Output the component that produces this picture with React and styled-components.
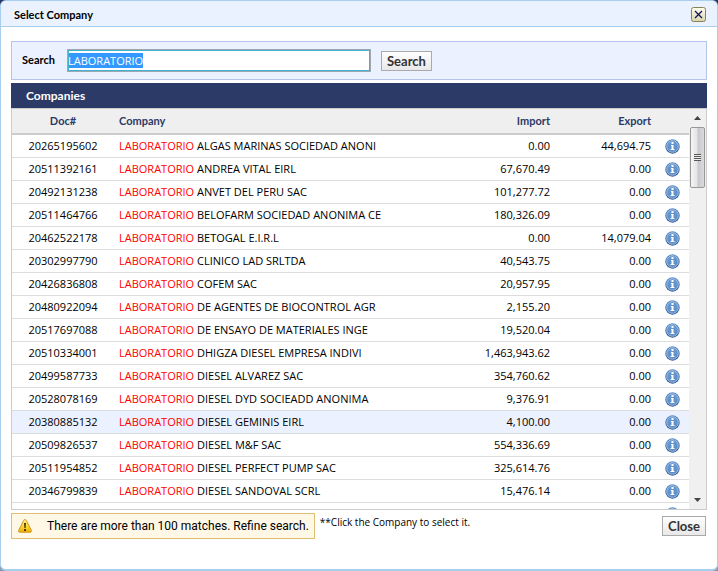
import React from "react";
import styled, { createGlobalStyle } from "styled-components";

const rows = [
  ["20265195602", "ALGAS MARINAS SOCIEDAD ANONI", "0.00", "44,694.75"],
  ["20511392161", "ANDREA VITAL EIRL", "67,670.49", "0.00"],
  ["20492131238", "ANVET DEL PERU SAC", "101,277.72", "0.00"],
  ["20511464766", "BELOFARM SOCIEDAD ANONIMA CE", "180,326.09", "0.00"],
  ["20462522178", "BETOGAL E.I.R.L", "0.00", "14,079.04"],
  ["20302997790", "CLINICO LAD SRLTDA", "40,543.75", "0.00"],
  ["20426836808", "COFEM SAC", "20,957.95", "0.00"],
  ["20480922094", "DE AGENTES DE BIOCONTROL AGR", "2,155.20", "0.00"],
  ["20517697088", "DE ENSAYO DE MATERIALES INGE", "19,520.04", "0.00"],
  ["20510334001", "DHIGZA DIESEL EMPRESA INDIVI", "1,463,943.62", "0.00"],
  ["20499587733", "DIESEL ALVAREZ SAC", "354,760.62", "0.00"],
  ["20528078169", "DIESEL DYD SOCIEADD ANONIMA", "9,376.91", "0.00"],
  ["20380885132", "DIESEL GEMINIS EIRL", "4,100.00", "0.00"],
  ["20509826537", "DIESEL M&F SAC", "554,336.69", "0.00"],
  ["20511954852", "DIESEL PERFECT PUMP SAC", "325,614.76", "0.00"],
  ["20346799839", "DIESEL SANDOVAL SCRL", "15,476.14", "0.00"],
  ["", "", "", ""],
];

const InfoIcon = () => (
  <svg width="15" height="15" viewBox="0 0 15 15" aria-hidden="true">
    <defs>
      <linearGradient id="rim" x1="0" y1="0" x2="0" y2="1">
        <stop offset="0" stopColor="#5c8fcb" />
        <stop offset="1" stopColor="#2c5293" />
      </linearGradient>
      <linearGradient id="info" x1="0" y1="0" x2="0" y2="1">
        <stop offset="0" stopColor="#6a9ad0" />
        <stop offset="1" stopColor="#5a8cc6" />
      </linearGradient>
    </defs>
    <circle cx="7.5" cy="7.5" r="7.2" fill="url(#rim)" />
    <circle cx="7.5" cy="7.5" r="5.8" fill="url(#info)" stroke="#b5cfea" strokeWidth="0.8" />
    <rect x="6.5" y="3" width="2" height="2" fill="#fff" />
    <path d="M6 6h2.500v4H9.500v1h-4v-1h1V7H6z" fill="#fff" />
  </svg>
);

const WarningIcon = () => (
  <svg width="16" height="16" viewBox="0 0 16 16" aria-hidden="true">
    <defs>
      <linearGradient id="warn" x1="0" y1="0" x2="0" y2="1">
        <stop offset="0" stopColor="#fff29a" />
        <stop offset="0.6" stopColor="#fbd32f" />
        <stop offset="1" stopColor="#f0a90c" />
      </linearGradient>
    </defs>
    <path
      d="M8 1.500c.6 0 1 .4 1.300.9l5 9.900c.5 1 0 1.900-1 1.900H2.700c-1 0-1.500-.9-1-1.900l5-9.900c.3-.5.7-.9 1.300-.9z"
      fill="url(#warn)"
      stroke="#cf9713"
    />
    <path d="M7 5h2l-.4 5H7.400z" fill="#4a3a10" />
    <rect x="7" y="11" width="2" height="2" fill="#4a3a10" />
  </svg>
);

const CloseIcon = () => (
  <svg width="15" height="15" viewBox="0 0 15 15" aria-hidden="true">
    <defs>
      <linearGradient id="close" x1="0" y1="0" x2="0" y2="1">
        <stop offset="0" stopColor="#fffff0" />
        <stop offset="1" stopColor="#d8d5ac" />
      </linearGradient>
    </defs>
    <rect x="0.5" y="0.5" width="14" height="14" rx="2" fill="url(#close)" stroke="#85825a" />
    <path d="M4 4l7 7M11 4l-7 7" stroke="#14145a" strokeWidth="1.3" />
  </svg>
);

const App = () => {
  const RefSearch = React.useRef(null);
  const [keyword, setKeyword] = React.useState("LABORATORIO");
  const [selected, setSelected] = React.useState("20380885132");

  React.useEffect(() => {
    RefSearch.current.focus();
    RefSearch.current.select();
  }, []);

  return (
    <>
      <GlobalStyle />
      <Dialog role="dialog" aria-labelledby="dialog-title">
        <DialogHeader>
          <DialogTitle id="dialog-title">Select Company</DialogTitle>
          <IconButton type="button" aria-label="Close dialog">
            <CloseIcon />
          </IconButton>
        </DialogHeader>
        <DialogBody>
          <SearchBar onSubmit={(e) => e.preventDefault()}>
            <SearchLabel htmlFor="search">Search</SearchLabel>
            <SearchInput
              id="search"
              ref={RefSearch}
              value={keyword}
              autoComplete="off"
              spellCheck={false}
              onChange={(e) => setKeyword(e.target.value)}
            />
            <Button type="submit">Search</Button>
          </SearchBar>
          <PanelTitle>Companies</PanelTitle>
          <Panel>
            <TableWrap>
              <Table>
                <thead>
                  <tr>
                    <HeadCell $width="102px" $align="center">Doc#</HeadCell>
                    <HeadCell>Company</HeadCell>
                    <HeadCell $width="100px" $align="right">Import</HeadCell>
                    <HeadCell $width="101px" $align="right">Export</HeadCell>
                    <HeadCell $width="33px" />
                  </tr>
                </thead>
                <tbody>
                  {rows.map(([doc, name, imp, exp], i) => (
                    <Row
                      key={`row${i}`}
                      $selected={doc === selected}
                      onClick={() => setSelected(doc)}
                    >
                      <Cell $align="center">{doc}</Cell>
                      <Cell>
                        {name && <Match>LABORATORIO</Match>} {name}
                      </Cell>
                      <Cell $align="right">{imp}</Cell>
                      <Cell $align="right">{exp}</Cell>
                      <IconCell>
                        <InfoIcon />
                      </IconCell>
                    </Row>
                  ))}
                </tbody>
              </Table>
            </TableWrap>
            <ScrollBar>
              <ScrollArrow viewBox="0 0 7 4">
                <path d="M0 4L3.500 0L7 4z" />
              </ScrollArrow>
              <ScrollThumb>
                <Grip />
              </ScrollThumb>
              <ScrollSpace />
              <ScrollArrow viewBox="0 0 7 4">
                <path d="M0 0L3.500 4L7 0z" />
              </ScrollArrow>
            </ScrollBar>
          </Panel>
          <Footer>
            <Warning>
              <WarningIcon />
              There are more than 100 matches. Refine search.
            </Warning>
            <Hint>**Click the Company to select it.</Hint>
            <CloseButton type="button">Close</CloseButton>
          </Footer>
        </DialogBody>
      </Dialog>
    </>
  );
};

export default App;

const headingFont = `Lato, "Open Sans", sans-serif`;

const GlobalStyle = createGlobalStyle`
  * {
    box-sizing: border-box;
  }
  body {
    margin: 0;
    background: linear-gradient(#2b3a66 50%, #8f96a6 50%);
    font-family: "Open Sans", "Noto Sans", sans-serif;
    font-size: 11px;
    color: #000;
  }
`;
const Dialog = styled.div`
  display: flex;
  flex-direction: column;
  height: 100vh;
  background: #fff;
  border: 1px solid #a9cfee;
  border-bottom-width: 2px;
  border-radius: 6px;
  overflow: hidden;
`;
const DialogHeader = styled.header`
  display: flex;
  align-items: center;
  justify-content: space-between;
  height: 26px;
  flex: none;
  padding: 2px 11px 0 13px;
  background: #eaf2ff;
  border-bottom: 1px solid #a9cfee;
`;
const DialogTitle = styled.h1`
  margin: 0;
  font-family: ${headingFont};
  font-size: 11px;
  font-weight: 700;
`;
const IconButton = styled.button`
  display: flex;
  padding: 0;
  border: 0;
  background: none;
`;
const DialogBody = styled.main`
  display: flex;
  flex-direction: column;
  flex: 1;
  min-height: 0;
  padding: 14px 10px 30px;
`;
const SearchBar = styled.form`
  display: flex;
  align-items: center;
  flex: none;
  height: 39px;
  padding: 0 10px;
  background: #ebf1ff;
  border: 1px solid #b5c5ea;
`;
const SearchLabel = styled.label`
  width: 45px;
  padding-bottom: 2px;
  font-family: ${headingFont};
  font-weight: 700;
`;
const SearchInput = styled.input`
  width: 304px;
  height: 23px;
  margin-right: 10px;
  padding: 0;
  border: 1px solid #9fa8b0;
  outline: 1px solid #3fb3d0;
  outline-offset: -2px;
  background: #fff;
  font: inherit;
  &::selection {
    background: #3399ff;
    color: #fff;
  }
`;
const Button = styled.button`
  height: 20px;
  padding: 0 5px;
  border: 1px solid #aaa;
  background: linear-gradient(#fefefe, #e8e8e8);
  color: #333;
  font-family: ${headingFont};
  font-size: 13px;
  font-weight: 700;
  line-height: 16px;
`;
const PanelTitle = styled.h2`
  flex: none;
  margin: 3px 0 0;
  padding-left: 15px;
  background: #2b3a66;
  color: #fff;
  font-family: ${headingFont};
  font-size: 12px;
  font-weight: 700;
  line-height: 25px;
`;
const Panel = styled.section`
  display: flex;
  flex: 1;
  min-height: 0;
  border: 1px solid #ccc;
  overflow: hidden;
`;
const TableWrap = styled.div`
  flex: 1;
  overflow: hidden;
`;
const Table = styled.table`
  width: 100%;
  table-layout: fixed;
  border-collapse: separate;
  border-spacing: 0;
`;
const HeadCell = styled.th`
  width: ${(props) => props.$width || "auto"};
  height: 26px;
  padding: 0 5px 2px;
  background: #efefef;
  border-bottom: 2px solid #ccc;
  color: #2b3a66;
  font-family: ${headingFont};
  font-weight: 700;
  text-align: ${(props) => props.$align || "left"};
`;
const Row = styled.tr`
  background: ${(props) => (props.$selected ? "#ebf1ff" : "#fff")};
  cursor: pointer;
`;
const Cell = styled.td`
  height: 23px;
  padding: 0 5px;
  border-bottom: 1px solid #ddd;
  line-height: 16px;
  text-align: ${(props) => props.$align || "left"};
  white-space: nowrap;
`;
const IconCell = styled(Cell)`
  padding: 0 9px;
  svg {
    display: block;
  }
`;
const Match = styled.span`
  color: #f00;
`;
const ScrollBar = styled.div`
  display: flex;
  flex-direction: column;
  align-items: center;
  width: 17px;
  padding: 7px 1px;
  background: #f0f0f0;
`;
const ScrollArrow = styled.svg`
  flex: none;
  width: 7px;
  height: 4px;
  fill: #444;
`;
const ScrollThumb = styled.div`
  display: flex;
  align-items: center;
  justify-content: center;
  flex: none;
  width: 15px;
  height: 61px;
  margin-top: 7px;
  border: 1px solid #979797;
  border-radius: 2px;
  background: linear-gradient(to right, #f5f5f5, #e4e4e6 45%, #c8c9cc 55%, #dadbdd);
`;
const Grip = styled.div`
  width: 7px;
  height: 7px;
  background: repeating-linear-gradient(#555 0 1px, #eee 1px 2px);
`;
const ScrollSpace = styled.div`
  flex: 1;
`;
const Footer = styled.footer`
  display: flex;
  align-items: flex-start;
  flex: none;
  margin-top: 3px;
`;
const Warning = styled.div`
  display: flex;
  align-items: center;
  gap: 14px;
  height: 26px;
  padding: 0 5px;
  background: #fff8e6;
  border: 1px solid #e0c070;
  font-family: Roboto, "Open Sans", sans-serif;
  font-size: 12px;
  white-space: nowrap;
`;
const Hint = styled.p`
  flex: 1;
  margin: 0;
  padding-left: 5px;
  font-size: 10px;
  line-height: 18px;
`;
const CloseButton = styled(Button)`
  margin: 3px 1px 0 0;
`;
